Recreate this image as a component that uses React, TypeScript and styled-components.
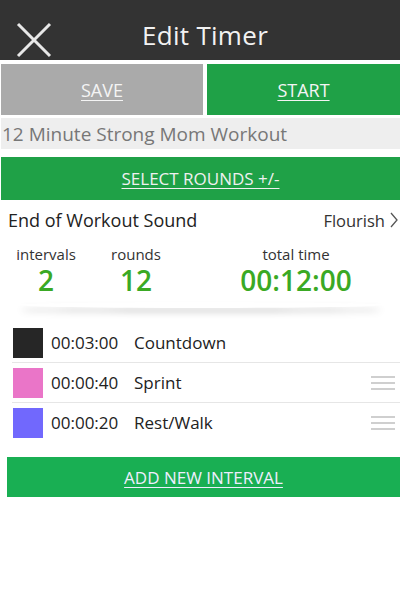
import React from "react";
import styled, { createGlobalStyle } from "styled-components";

const Global = createGlobalStyle`
  html, body { margin: 0; padding: 0; background: #fff; }
  body { font-family: "Open Sans", "Noto Sans", sans-serif; }
`;

const Page = styled.div`
  width: 400px;
  height: 600px;
  background: #fff;
  display: flex;
  flex-direction: column;
`;

const Header = styled.div`
  height: 60px;
  background: #333333;
  display: flex;
  align-items: center;
  position: relative;
  justify-content: center;
`;

const CloseBtn = styled.div`
  position: absolute;
  left: 16px;
  top: 22px;
  width: 36px;
  height: 36px;
`;

const Title = styled.div`
  color: #f2f2f2;
  font-size: 26px;
  padding-top: 10px;
  letter-spacing: 0.3px;
  margin-left: 10px;
`;

const ButtonRow = styled.div`
  display: flex;
  gap: 4px;
  margin-top: 4px;
  padding-left: 1px;
  height: 51px;
`;

const ActionButton = styled.div<{ $bg: string; $width?: string }>`
  flex: ${(p) => (p.$width ? `0 0 ${p.$width}` : "1")};
  background: ${(p) => p.$bg};
  display: flex;
  align-items: center;
  justify-content: center;
  color: #f4f4f4;
  font-size: 18px;
  text-decoration: underline;
  text-underline-offset: 3px;
`;

const NameField = styled.div`
  margin: 3px 0 0 1px;
  height: 31px;
  background: #eeeeee;
  color: #777;
  font-size: 19px;
  display: flex;
  align-items: center;
  padding-left: 1px;
`;

const RoundsButton = styled.div`
  margin: 8px 0 0 1px;
  height: 43px;
  background: #1fa147;
  color: #f0f0f0;
  font-size: 17px;
  display: flex;
  align-items: center;
  justify-content: center;
  text-decoration: underline;
  text-underline-offset: 3px;
`;

const SoundRow = styled.div`
  display: flex;
  align-items: center;
  justify-content: space-between;
  padding: 8px 2px 0 8px;
  height: 24px;
`;

const SoundLabel = styled.div`
  font-size: 18px;
  color: #222;
`;

const SoundValue = styled.div`
  font-size: 16.5px;
  color: #333;
  display: flex;
  align-items: center;
  gap: 5px;
`;

const Stats = styled.div`
  display: grid;
  grid-template-columns: 76px 104px 216px;
  padding: 13px 0 0 8px;
  height: 57px;
`;

const ShadowBar = styled.div`
  height: 6px;
  margin: 0 16px 0 18px;
  border-radius: 50%;
  box-shadow: 0 5px 7px -2px rgba(0, 0, 0, 0.42);
`;

const Stat = styled.div`
  display: flex;
  flex-direction: column;
  align-items: center;
`;

const StatLabel = styled.div`
  font-size: 15px;
  color: #333;
  line-height: 18px;
`;

const StatValue = styled.div`
  font-size: 28px;
  font-weight: 600;
  color: #3aa924;
  line-height: 32px;
  margin-top: 1px;
`;

const List = styled.div`
  margin-top: 15px;
  padding-left: 12px;
  display: flex;
  flex-direction: column;
`;

const Row = styled.div<{ $last?: boolean }>`
  display: flex;
  align-items: center;
  height: 39px;
  border-bottom: ${(p) => (p.$last ? "none" : "1px solid #e6e6e6")};
  padding-right: 5px;
`;

const Swatch = styled.div<{ $color: string }>`
  width: 30px;
  height: 30px;
  background: ${(p) => p.$color};
  margin-left: 1px;
`;

const Time = styled.div`
  font-size: 17px;
  color: #222;
  margin-left: 8px;
  width: 83px;
`;

const Name = styled.div`
  font-size: 17px;
  color: #222;
  flex: 1;
`;

const Handle = styled.div`
  width: 24px;
  display: flex;
  flex-direction: column;
  gap: 4px;
  & > span {
    display: block;
    height: 2px;
    background: #cfcfcf;
  }
`;

const AddButton = styled.div`
  margin: 15px 0 0 7px;
  height: 40px;
  background: #19af53;
  color: #eef;
  font-size: 17px;
  display: flex;
  align-items: center;
  justify-content: center;
  text-decoration: underline;
  text-underline-offset: 3px;
`;

const intervals = [
  { color: "#262626", time: "00:03:00", name: "Countdown", handle: false },
  { color: "#ea75c8", time: "00:00:40", name: "Sprint", handle: true },
  { color: "#7168fd", time: "00:00:20", name: "Rest/Walk", handle: true },
];

export default function App() {
  return (
    <Page>
      <Global />
      <Header>
        <CloseBtn>
          <svg width="36" height="36" viewBox="0 0 36 36">
            <path d="M2 2 L34 34 M34 2 L2 34" stroke="#e8e8e8" strokeWidth="3" />
          </svg>
        </CloseBtn>
        <Title>Edit Timer</Title>
      </Header>
      <ButtonRow>
        <ActionButton $bg="#aaaaaa" $width="202px">SAVE</ActionButton>
        <ActionButton $bg="#1fa147">START</ActionButton>
      </ButtonRow>
      <NameField>12 Minute Strong Mom Workout</NameField>
      <RoundsButton>SELECT ROUNDS +/-</RoundsButton>
      <SoundRow>
        <SoundLabel>End of Workout Sound</SoundLabel>
        <SoundValue>
          Flourish
          <svg width="8" height="16" viewBox="0 0 8 16">
            <path d="M1 1 L7 8 L1 15" stroke="#555" strokeWidth="1.3" fill="none" />
          </svg>
        </SoundValue>
      </SoundRow>
      <Stats>
        <Stat>
          <StatLabel>intervals</StatLabel>
          <StatValue>2</StatValue>
        </Stat>
        <Stat>
          <StatLabel>rounds</StatLabel>
          <StatValue>12</StatValue>
        </Stat>
        <Stat>
          <StatLabel>total time</StatLabel>
          <StatValue>00:12:00</StatValue>
        </Stat>
      </Stats>
      <ShadowBar />
      <List>
        {intervals.map((it, i) => (
          <Row key={it.name} $last={i === intervals.length - 1}>
            <Swatch $color={it.color} />
            <Time>{it.time}</Time>
            <Name>{it.name}</Name>
            {it.handle && (
              <Handle>
                <span />
                <span />
                <span />
              </Handle>
            )}
          </Row>
        ))}
      </List>
      <AddButton>ADD NEW INTERVAL</AddButton>
    </Page>
  );
}
